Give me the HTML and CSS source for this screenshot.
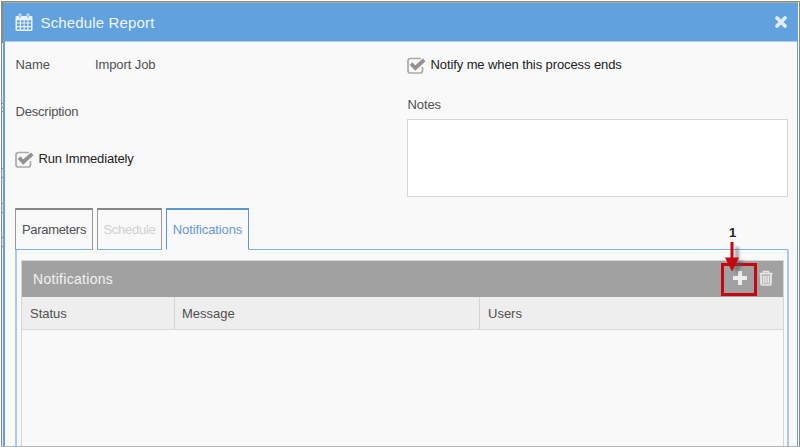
FILE: index.html
```html
<!DOCTYPE html>
<html lang="en">
<head>
<meta charset="utf-8">
<title>Schedule Report</title>
<link rel="stylesheet" href="styles.css">
</head>
<body>
<div class="frame">
  <div class="backdrop-edge">
    <svg viewBox="0 0 2 444" width="2" height="444"><path d="M0 101.500h2M0 105.500h2M0 109.500h2M0 166.500h2M0 175.500h2M0 201.500h2M0 210.500h2M0 235.500h2M0 244.500h2" stroke="#8d9294" stroke-width="1"/></svg>
  </div>
  <section class="dialog">
    <header class="titlebar">
      <svg class="calendar" viewBox="0 0 18 19" width="18" height="19">
        <path fill="#e9f1fa" fill-rule="evenodd" d="M2 3h14.200q1.300 0 1.300 1.300v12.400q0 1.300-1.300 1.300H1.800Q.5 18 .5 16.700V4.300Q.5 3 2 3zM2 7.200v2.300h2.800V7.200zM6 7.200v2.300h2.600V7.200zM9.700 7.200v2.300h2.600V7.200zM13.400 7.200v2.300H16V7.200zM2 10.600v2.500h2.800v-2.500zM6 10.600v2.500h2.600v-2.500zM9.700 10.600v2.500h2.600v-2.500zM13.400 10.600v2.500H16v-2.500zM2 14.200v2.400h2.800v-2.400zM6 14.200v2.400h2.600v-2.400zM9.700 14.200v2.400h2.600v-2.400zM13.400 14.200v2.400H16v-2.400z"/>
        <path fill="none" stroke="#e9f1fa" stroke-width="3" stroke-linecap="round" d="M5 2v2.200M13 2v2.200"/>
        <path fill="none" stroke="#61a2de" stroke-width="1" stroke-linecap="round" d="M5 2v2.600M13 2v2.600"/>
      </svg>
      <h1 class="title">Schedule Report</h1>
      <svg class="close" viewBox="0 0 14 14" width="14" height="14"><path d="M3 3l8 8M11 3l-8 8" stroke="#e2edf9" stroke-width="3.800" stroke-linecap="round"/></svg>
    </header>
    <div class="form">
      <div class="left">
        <div class="row name"><span class="label">Name</span><span class="value">Import Job</span></div>
        <div class="row desc">Description</div>
        <div class="row check run">
          <svg class="tick" viewBox="0 0 19 17" width="19" height="17"><path d="M14 1.500H3.500Q1 1.500 1 4v9.500Q1 16 3.500 16h9.500q2.500 0 2.500-2.500V10" fill="none" stroke="#aaa" stroke-width="1.700"/><path d="M4 6.700l4.300 4.300L17.200 2.800" fill="none" stroke="#929292" stroke-width="3.800"/></svg>
          <span>Run Immediately</span>
        </div>
      </div>
      <div class="right">
        <div class="row check notify">
          <svg class="tick" viewBox="0 0 19 17" width="19" height="17"><path d="M14 1.500H3.500Q1 1.500 1 4v9.500Q1 16 3.500 16h9.500q2.500 0 2.500-2.500V10" fill="none" stroke="#aaa" stroke-width="1.700"/><path d="M4 6.700l4.300 4.300L17.200 2.800" fill="none" stroke="#929292" stroke-width="3.800"/></svg>
          <span>Notify me when this process ends</span>
        </div>
        <div class="row notes">Notes</div>
        <div class="textarea"></div>
      </div>
    </div>
    <nav class="tabs">
      <div class="tab parameters">Parameters</div>
      <div class="tab schedule">Schedule</div>
      <div class="tab active">Notifications</div>
      <div class="tab-rest"></div>
    </nav>
    <div class="panel">
      <div class="grid">
        <div class="gridbar">
          <h2 class="grid-title">Notifications</h2>
          <svg class="plus" viewBox="0 0 16 16" width="16" height="16"><path d="M8 1v14M1 8h14" stroke="#ededed" stroke-width="4"/></svg>
          <svg class="trash" viewBox="0 0 14 16" width="14" height="16"><path d="M4.500 3V1.500h5V3M.5 3.500h13" fill="none" stroke="#e8e8e8" stroke-width="1.600"/><path d="M2 4v9.500q0 1.500 1.500 1.500h7q1.500 0 1.500-1.500V4" fill="#bdbdbd" stroke="#e8e8e8" stroke-width="1.700"/><path d="M4.700 6v7M7 6v7M9.300 6v7" stroke="#ececec" stroke-width="1.200"/></svg>
        </div>
        <div class="columns"><div>Status</div><div>Message</div><div>Users</div></div>
      </div>
    </div>
  </section>
  <div class="callout">
    <span class="number">1</span>
    <svg class="arrow" viewBox="0 0 28 36" width="28" height="36">
      <defs><filter id="soft" x="-50%" y="-50%" width="200%" height="200%"><feGaussianBlur stdDeviation="1.500"/></filter></defs>
      <path d="M15 5h4v14h5l-7 13-7-13h5z" fill="#555" opacity=".5" filter="url(#soft)"/>
      <path d="M10.500 0h3v15.500h5.500L12 29.500 5 15.500h5.500z" fill="#c40711"/>
    </svg>
    <div class="box"></div>
  </div>
</div>
</body>
</html>
```
FILE: styles.css
```css
* { box-sizing: border-box; }
body { margin: 0; background: #fff; font: 13px/16px "Liberation Sans", Arial, sans-serif; letter-spacing: -.1px; color: #505050; }
h1, h2 { margin: 0; font-weight: normal; }
svg { display: block; flex: none; }
.frame { position: relative; display: flex; width: 799px; height: 446px; margin-left: 1px; margin-top: 1px; border: 1px solid #8b8b86; border-bottom-color: #b4b4b4; overflow: hidden; }
.backdrop-edge { width: 1px; overflow: hidden; background: linear-gradient(#8b8b86 41px, #e9edf0 41px); }
.dialog { flex: 1; display: flex; flex-direction: column; margin-right: 1px; border-left: 2px solid #61a2de; border-right: 1px solid #61a2de; background: #f9f9f9; border-top: 1px solid #a9aaa0; }
.titlebar { display: flex; align-items: center; height: 39px; padding: 0 9px 0 10px; background: #61a2de; border-bottom: 1px solid #abcdf0; }
.title { flex: 1; margin-left: 7.500px; font-size: 15px; line-height: 20px; color: #f0f5fb; letter-spacing: .15px; padding-top: 1px; }
.form { display: flex; height: 166px; padding: 0 9px 0 10px; }
.left { width: 392px; }
.right { flex: 1; }
.name { display: flex; margin-top: 15px; padding-left: .5px; }
.label { width: 79.500px; }
.desc { margin-top: 31px; padding-left: .5px; letter-spacing: -.2px; }
.check { display: flex; align-items: center; height: 16px; color: #222; }
.check span { margin-left: 4.500px; }
.run { margin-top: 31px; letter-spacing: -.17px; }
.notify { margin-top: 15px; }
.notes { margin-top: 24px; padding-left: .5px; }
.textarea { height: 78px; margin-top: 6px; background: #fff; border: 1px solid #d5d5d5; }
.tabs { display: flex; height: 42px; padding: 0 9px 0 10px; }
.tab { height: 42px; padding-top: 12px; text-align: center; border: solid #999; border-width: 2px 1px 0; border-top-color: #858585; border-bottom: 1px solid #7cb3e8; white-space: nowrap; }
.parameters { width: 78px; letter-spacing: -.3px; }
.schedule { width: 65px; color: #d0d0d0; letter-spacing: -.25px; }
.active { width: 83px; color: #6499d7; border-color: #5798d8; border-bottom-color: transparent; }
.tab-rest { flex: 1; border-bottom: 1px solid #7cb3e8; }
.tab + .tab { margin-left: 4px; }
.panel { flex: 1; display: flex; margin: 0 8px 0 10px; padding: 10px 3px 0 4px; border: solid #a9caee; border-width: 0 2px; }
.grid { flex: 1; border: 1px solid #d5d5d5; border-bottom: 0; }
.gridbar { display: flex; align-items: center; height: 36px; padding: 0 10px 3px 11px; background: #a1a1a1; }
.grid-title { flex: 1; font-size: 14px; line-height: 18px; padding-top: 2px; color: #f2f2f2; letter-spacing: .3px; }
.plus { margin-right: 11px; }
.columns { display: grid; grid-template-columns: 153px 305px 1fr; height: 33px; background: #eee; border-bottom: 1px solid #d8d8d8; }
.columns div { padding: 9px 7px 0; border-right: 1px solid #d4d4d4; letter-spacing: 0; }
.columns div:first-child { padding-left: 8px; }
.columns div:last-child { border-right: 0; padding-left: 8px; }
.callout { position: absolute; left: 719px; top: 221px; width: 36px; height: 73px; }
.number { position: absolute; left: 8px; top: 2px; font-weight: bold; color: #222; }
.arrow { position: absolute; left: -1px; top: 19px; z-index: 1; }
.box { position: absolute; left: 0; top: 40px; width: 36px; height: 33px; border: 3px solid #c40711; }
```
